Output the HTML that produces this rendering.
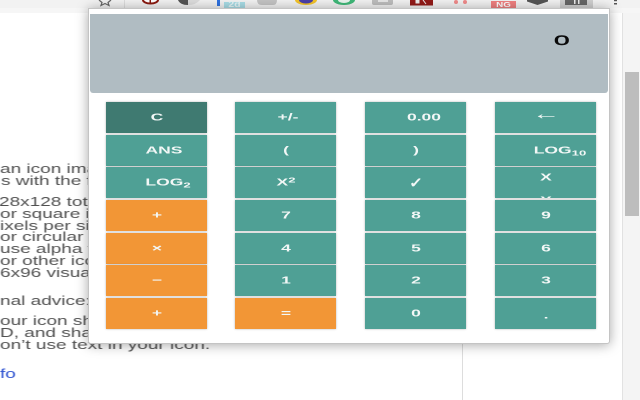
<!DOCTYPE html>
<html><head><meta charset="utf-8">
<style>
html,body{margin:0;padding:0;background:#fff}
#r{position:relative;width:640px;height:400px;overflow:hidden;background:#fff;font-family:"Liberation Sans",sans-serif}
#r div{position:absolute}
.p{left:0;white-space:nowrap;font-size:12.5px;line-height:14px;color:#505050;transform:scaleX(1.52);transform-origin:0 0;filter:blur(.35px)}
.b{width:101px;height:31px;background:#4fa095;box-shadow:0 0 2px rgba(0,0,0,.3)}
.o{background:#f29636}
.b span{position:absolute;left:50%;top:50%;color:#f2f7f6;font-size:10px;font-weight:bold;white-space:nowrap;transform:translate(-50%,-50%) scaleX(1.75)}
.b sub{font-size:7.500px;line-height:0;vertical-align:-2px}
.b sup{font-size:7.500px;line-height:0;vertical-align:3px}
</style></head><body><div id="r">
<div style="left:0;top:0;width:640px;height:8px;background:#f2f2f2"></div>
<div style="left:0;top:8px;width:640px;height:5px;background:#f6f6f6"></div>
<div style="left:124px;top:0;width:1px;height:8px;background:#ddd"></div>
<svg style="position:absolute;left:0;top:0" width="640" height="9" viewBox="0 0 640 9">
<path d="M99 0l3 2.500-1 3 4-2 4 2-1-3 3-2.500" fill="none" stroke="#666" stroke-width="1.200"/>
<path d="M143 0a7.500 3.500 0 0 0 15 0" fill="#fff" stroke="#8a1a10" stroke-width="2"/><rect x="149.500" y="0" width="1.500" height="3" fill="#8a1a10"/>
<path d="M178 0q2 5 10 5V0z" fill="#555"/><path d="M188 0v5q8 0 12-5z" fill="#ddd"/>
<rect x="217" y="0" width="3" height="6" fill="#2f72e0"/><rect x="224" y="2" width="21" height="6" fill="#a9dde6"/>
<path d="M257 0q0 5 5 5h11q4 0 4-5z" fill="#c4c4c4"/>
<path d="M295 0a11 5 0 0 0 22 0z" fill="#f3c42b"/><path d="M299 0a7 3.500 0 0 0 14 0z" fill="#4b3fa8"/>
<path d="M333 0a11 5 0 0 0 22 0z" fill="#3fb878"/><path d="M338 0a6 3 0 0 0 12 0z" fill="#e8f5ee"/>
<path d="M372 0v3q0 2 2 2h17q2 0 2-2V0z" fill="#bdbdbd"/><path d="M378 0v2h10V0z" fill="#e6e6e6"/>
<rect x="410" y="0" width="23" height="5.500" fill="#921a18"/><path d="M416 0h3v3h-3zM423 0l3 4" stroke="#eee" fill="#eee"/>
<circle cx="456" cy="2" r="2" fill="#f08a8a"/><circle cx="465" cy="2" r="2" fill="#f08a8a"/>
<rect x="491" y="1" width="25" height="7" fill="#f08080"/>
<path d="M527 0h21v1.500l-10.500 3.500-10.500-3.500z" fill="#555"/>
<rect x="560" y="0" width="33" height="8" fill="#cfcfcf"/><rect x="565" y="0" width="22" height="5" fill="#666"/>
<rect x="574" y="0" width="1.500" height="4" fill="#eee"/><rect x="578" y="0" width="1.500" height="4" fill="#eee"/>
<rect x="614" y="0" width="3" height="1.200" fill="#555"/><rect x="614" y="3" width="3" height="1.500" fill="#555"/>
</svg>
<div style="left:491px;top:1.500px;width:25px;height:7px;color:#fff;font-size:7px;line-height:7px;font-weight:bold;text-align:center;transform:scaleX(1.4)">NG</div>
<div style="left:224px;top:2px;width:21px;height:6px;color:#e8f6f8;font-size:8px;line-height:6px;font-weight:bold;text-align:center;transform:scaleX(1.3)">2d</div>
<div style="left:462px;top:13px;width:1px;height:387px;background:#ddd"></div>
<div style="left:622px;top:13px;width:18px;height:387px;background:#f4f4f4;border-left:1px solid #e2e2e2;box-sizing:border-box"></div>
<div style="left:625px;top:72px;width:14px;height:144px;background:#bdbdbd"></div>
<div class="p" style="top:162px;left:0">an icon image</div>
<div class="p" style="top:174px;left:1px">s with the fol</div>
<div class="p" style="top:195px;left:-1px">28x128 total</div>
<div class="p" style="top:207px;left:0">or square ico</div>
<div class="p" style="top:218.500px;left:0">ixels per side</div>
<div class="p" style="top:230px;left:0">or circular ic</div>
<div class="p" style="top:242px;left:0">use alpha to</div>
<div class="p" style="top:254px;left:0">or other icon</div>
<div class="p" style="top:265.500px;left:0">6x96 visual</div>
<div class="p" style="top:294px;left:0">nal advice:</div>
<div class="p" style="top:314px;left:0">our icon sho</div>
<div class="p" style="top:326px;left:0">D, and shade</div>
<div class="p" style="top:338px;left:0">on’t use text in your icon.</div>
<div class="p" style="top:366.500px;left:0;color:#2a4fd0">fo</div>
<div style="left:88px;top:8px;width:522px;height:336px;box-sizing:border-box;background:#fff;border:1px solid #c4c4c4;box-shadow:0 1px 12px rgba(0,0,0,.35);border-radius:0 0 3px 3px"></div>
<div style="left:90px;top:13.500px;width:518px;height:79.500px;background:#b0bcc2;border-radius:0 0 3px 3px"></div>
<div style="left:554px;top:31px;color:#0a0a0a;font-size:14px;line-height:18px;font-weight:normal;-webkit-text-stroke:.4px #0a0a0a;transform:scaleX(2);transform-origin:0 0">0</div>

<div class="b" style="left:106px;top:102px;background:#3f7a71"><span>C</span></div>
<div class="b" style="left:235px;top:102px"><span style="margin-left:2px">+/-</span></div>
<div class="b" style="left:365px;top:102px"><span style="margin-left:8px">0.00</span></div>
<div class="b" style="left:495px;top:102px"><span style="margin-top:-3px;font-size:16px;font-weight:bold">←</span></div>

<div class="b" style="left:106px;top:135px"><span style="margin-left:7px">ANS</span></div>
<div class="b" style="left:235px;top:135px"><span>(</span></div>
<div class="b" style="left:365px;top:135px"><span>)</span></div>
<div class="b" style="left:495px;top:135px"><span style="margin-left:14px">LOG<sub>10</sub></span></div>

<div class="b" style="left:106px;top:167px"><span style="margin-left:11px">LOG<sub>2</sub></span></div>
<div class="b" style="left:235px;top:167px"><span>X<sup>2</sup></span></div>
<div class="b" style="left:365px;top:167px"><span style="font-size:14px;font-weight:bold;transform:translate(-50%,-50%) scaleX(1.2)">✓</span></div>
<div class="b" style="left:495px;top:167px;overflow:hidden"><span style="margin-top:-4.500px">X</span><span style="margin-top:18px">X</span></div>

<div class="b o" style="left:106px;top:200px"><span>+</span></div>
<div class="b" style="left:235px;top:200px"><span>7</span></div>
<div class="b" style="left:365px;top:200px"><span>8</span></div>
<div class="b" style="left:495px;top:200px"><span>9</span></div>

<div class="b o" style="left:106px;top:233px"><span>×</span></div>
<div class="b" style="left:235px;top:233px"><span>4</span></div>
<div class="b" style="left:365px;top:233px"><span>5</span></div>
<div class="b" style="left:495px;top:233px"><span>6</span></div>

<div class="b o" style="left:106px;top:265px"><span>−</span></div>
<div class="b" style="left:235px;top:265px"><span>1</span></div>
<div class="b" style="left:365px;top:265px"><span>2</span></div>
<div class="b" style="left:495px;top:265px"><span>3</span></div>

<div class="b o" style="left:106px;top:298px"><span>+</span></div>
<div class="b o" style="left:235px;top:298px"><span>=</span></div>
<div class="b" style="left:365px;top:298px"><span>0</span></div>
<div class="b" style="left:495px;top:298px"><span style="margin-top:2px">.</span></div>
</div></body></html>
